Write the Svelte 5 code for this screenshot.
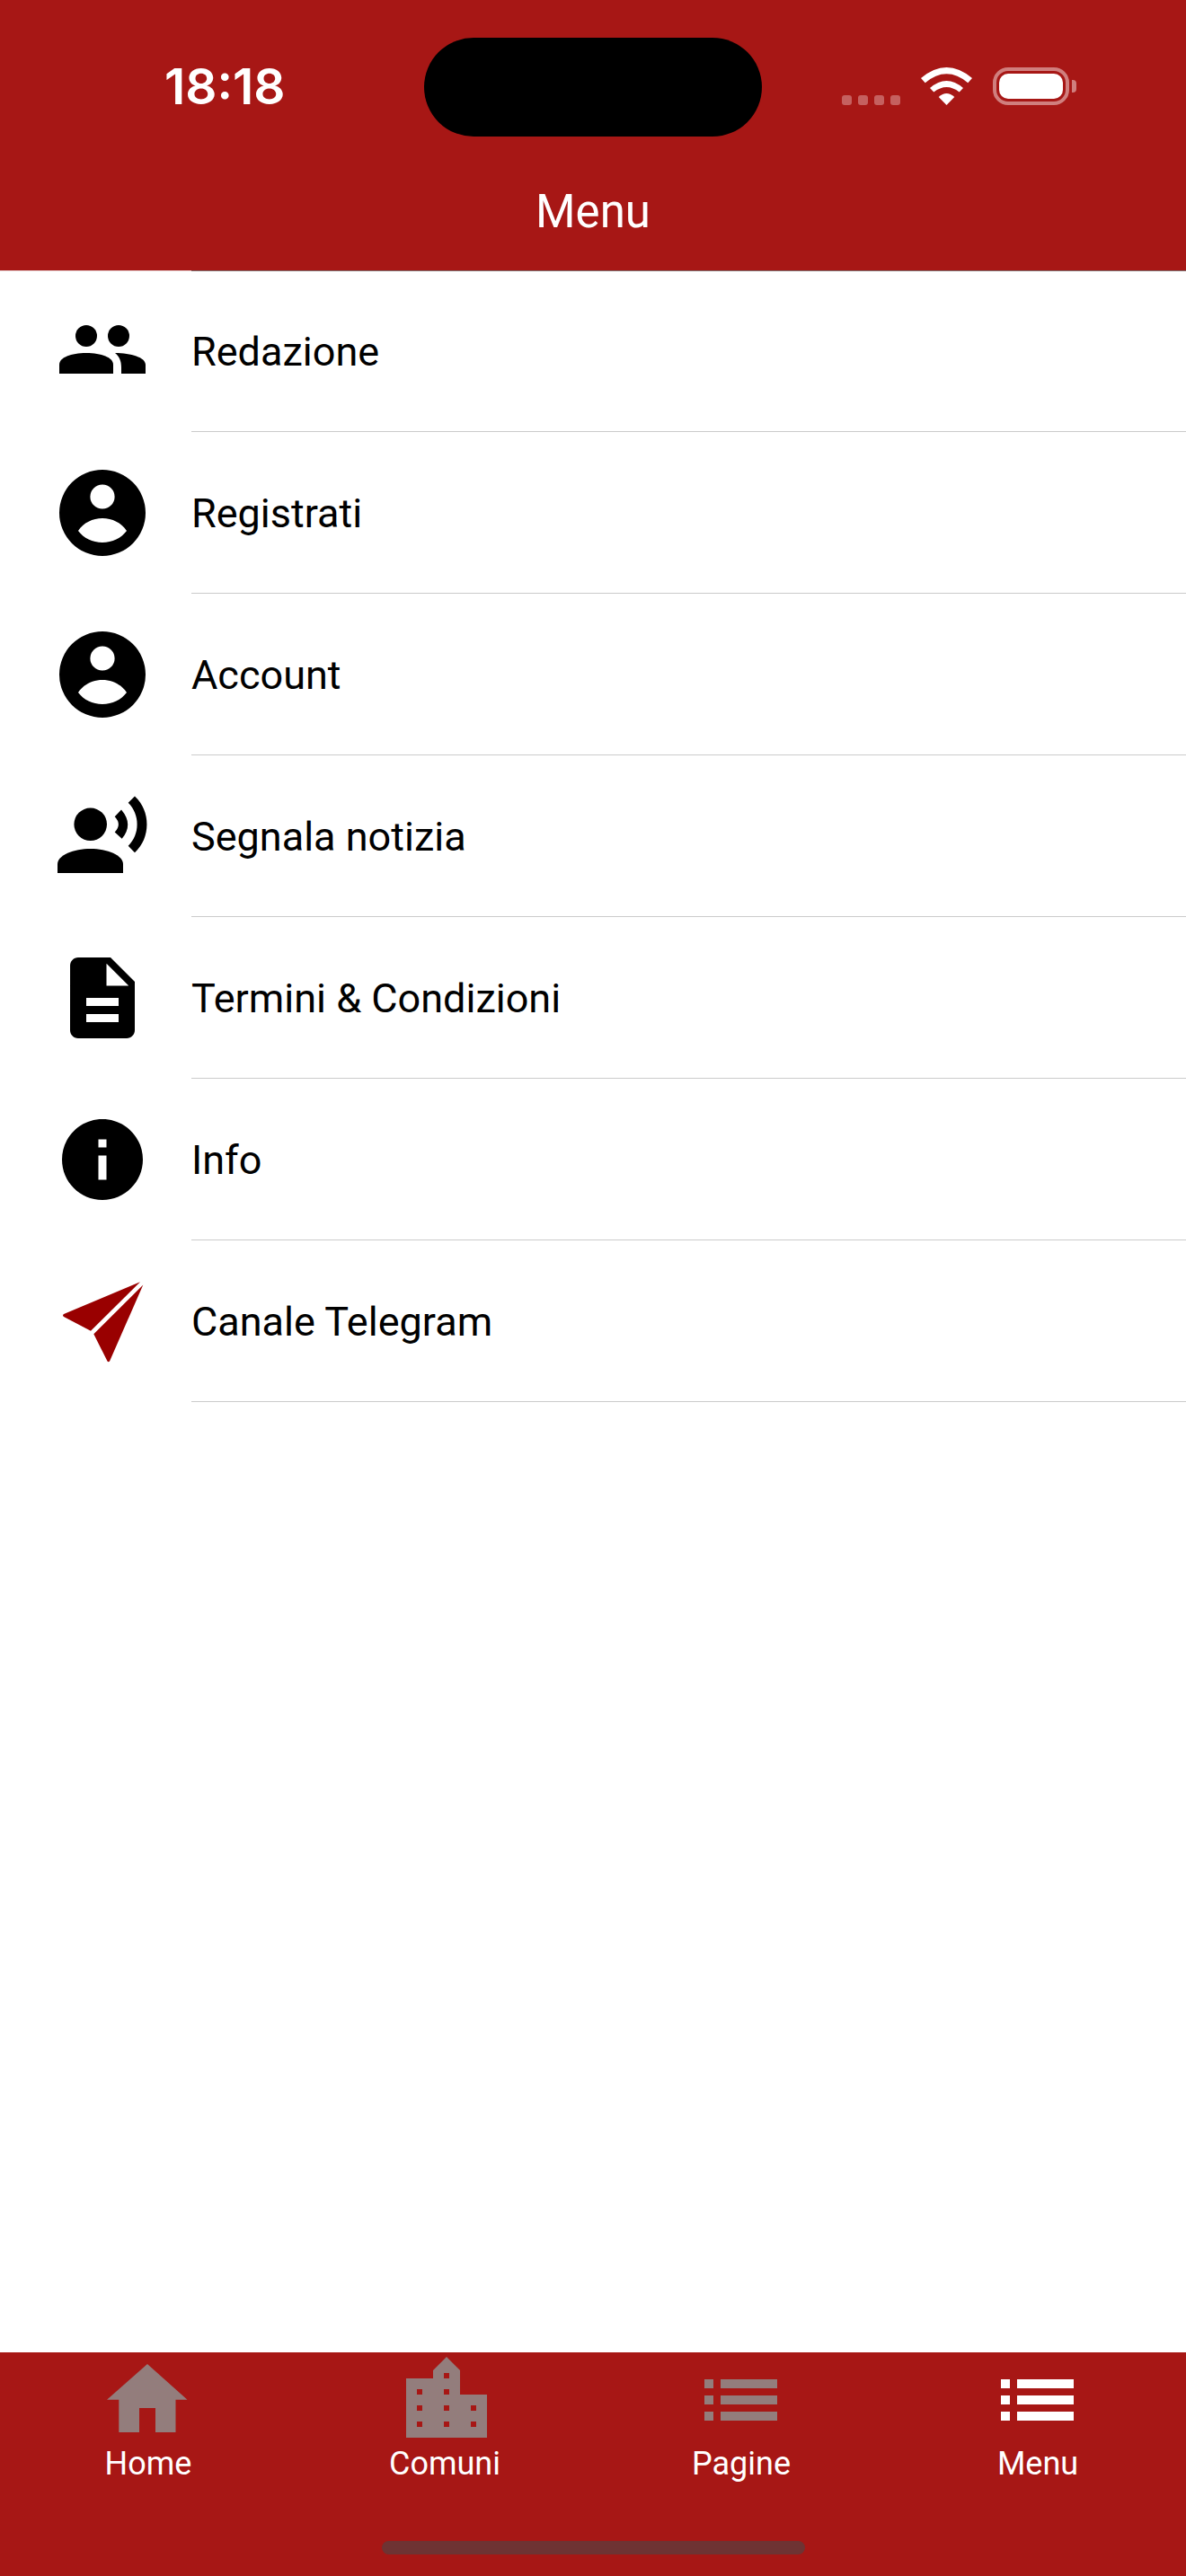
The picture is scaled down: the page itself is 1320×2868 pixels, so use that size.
<script>
  const rows = [
    { label: "Redazione", icon: "people" },
    { label: "Registrati", icon: "account" },
    { label: "Account", icon: "account" },
    { label: "Segnala notizia", icon: "voice" },
    { label: "Termini & Condizioni", icon: "doc" },
    { label: "Info", icon: "info" },
    { label: "Canale Telegram", icon: "plane" }
  ];

  const tabs = [
    { label: "Home", icon: "home" },
    { label: "Comuni", icon: "city" },
    { label: "Pagine", icon: "list" },
    { label: "Menu", icon: "list", active: true }
  ];

  const windows = [
    [57, 21], [27, 39], [57, 39], [27, 57], [57, 57], [87, 57], [27, 75], [57, 75], [87, 75]
  ];
</script>

<div class="screen">
  <header class="header">
    <div class="status">
      <span class="time">18:18</span>
      <div class="island"></div>
      <div class="signal">
        <i></i><i></i><i></i><i></i>
      </div>
      <svg class="wifi" width="57" height="42" viewBox="0 0 57 42">
        <path d="M0 12Q28.5-12 57 12L52.3 17.3Q28.5-2.6 4.7 17.3Z" />
        <path d="M10 23Q28.5 7 47 23L42.7 27.5Q28.5 16.5 14.3 27.5Z" />
        <path d="M19.7 33Q28.5 25 37.3 33L28.5 42Z" />
      </svg>
      <div class="battery"><div class="level"></div></div>
      <div class="nub"></div>
    </div>
    <h1 class="title">Menu</h1>
  </header>
  <div class="hairline"></div>

  <main class="list">
    {#each rows as row}
      <div class="row">
        <div class="row-icon">
          {#if row.icon === "people"}
            <svg width="108" height="108" viewBox="-6 -6 108 108">
              <circle cx="30" cy="31" r="12" />
              <circle cx="66" cy="31" r="12" />
              <path d="M0 73V63C0 55 13 50 30 50S60 55 60 63V73Z" />
              <path d="M62 50C80 50 96 55 96 63V73H69V66C69 59 67 54 62 50Z" />
            </svg>
          {:else if row.icon === "account"}
            <svg width="108" height="108" viewBox="-6 -6 108 108">
              <path
                fill-rule="evenodd"
                d="M48 0A48 48 0 1 1 48 96A48 48 0 1 1 48 0ZM48 16.4A13.6 13.6 0 1 0 48 43.6A13.6 13.6 0 1 0 48 16.4ZM21 68C27 76 37 81 48 81S69 76 75 68C69 59 59 54 48 54S27 59 21 68Z"
              />
            </svg>
          {:else if row.icon === "voice"}
            <svg width="108" height="108" viewBox="-6 -6 108 108">
              <circle cx="34.7" cy="34.8" r="18.3" />
              <path d="M-2 89V79C-2 69 16 62 34.7 62S71 69 71 79V89Z" />
              <path d="M69 18.5Q83 34.8 69.7 50.8L61.7 43.5Q70 34.8 61.7 26.2Z" />
              <path d="M84 3.5C102 20 102 50 84 66.2L76.7 58.8C90 46 90 24 76.7 10.8Z" />
            </svg>
          {:else if row.icon === "doc"}
            <svg width="108" height="108" viewBox="0 0 24 24">
              <path d="M14 2H6c-1.1 0-1.99.9-1.99 2L4 20c0 1.1.89 2 1.99 2H18c1.1 0 2-.9 2-2V8l-6-6zm2 16H8v-2h8v2zm0-4H8v-2h8v2zm-3-5V3.5L18.5 9H13z" />
            </svg>
          {:else if row.icon === "info"}
            <svg width="108" height="108" viewBox="0 0 24 24">
              <path d="M12 2C6.48 2 2 6.48 2 12s4.48 10 10 10 10-4.48 10-10S17.52 2 12 2zm1 15h-2v-6h2v6zm0-8h-2V7h2v2z" />
            </svg>
          {:else}
            <svg width="108" height="108" viewBox="-6 -6 108 108" fill="#990000">
              <path d="M90 4.2L5 40Q3 41.5 5 43L35 58.8Z" />
              <path d="M93.3 7.5L38.3 62.2L53.5 92.5Q54.7 94 56 92.5Z" />
            </svg>
          {/if}
        </div>
        <div class="row-label">{row.label}</div>
      </div>
    {/each}
  </main>

  <footer class="tabbar">
    {#each tabs as tab}
      <div class="tab" class:active={tab.active}>
        {#if tab.icon === "home"}
          <svg class="tab-icon" width="108" height="90" viewBox="1 0 108 90">
            <path d="M54 8L98.5 47.7H85.5V84H63V57H45V84H22.3V47.7H9Z" />
          </svg>
        {:else if tab.icon === "city"}
          <svg class="tab-icon" width="108" height="90" viewBox="1 0 108 90">
            <path d="M57 0L72 15V42H102V90H12V24H42V15Z" />
            {#each windows as w}
              <rect class="window" x={w[0] - 3} y={w[1] - 3} width="6" height="6" />
            {/each}
          </svg>
        {:else}
          <svg class="tab-icon" width="108" height="90" viewBox="0 0 108 90">
            <rect x="13" y="25" width="10" height="10" />
            <rect x="31" y="25" width="63" height="10" />
            <rect x="13" y="43" width="10" height="10" />
            <rect x="31" y="43" width="63" height="10" />
            <rect x="13" y="61" width="10" height="10" />
            <rect x="31" y="61" width="63" height="10" />
          </svg>
        {/if}
        <span class="tab-label">{tab.label}</span>
      </div>
    {/each}
    <div class="home-indicator"></div>
  </footer>
</div>

<style>
  :global(body) {
    margin: 0;
    background: #fff;
  }

  .screen {
    width: 1320px;
    height: 2868px;
    display: flex;
    flex-direction: column;
    font-family: Roboto, "Liberation Sans", sans-serif;
    background: #fff;
    overflow: hidden;
  }

  .header {
    height: 301px;
    box-sizing: border-box;
    background: #a71715;
    color: #fff;
    padding-top: 42px;
  }

  .status {
    height: 110px;
    display: flex;
    align-items: flex-start;
  }

  .time {
    width: 472px;
    box-sizing: border-box;
    padding: 27px 0 0 183px;
    font-family: Inter, sans-serif;
    font-weight: 600;
    font-size: 55px;
    line-height: 54px;
    white-space: nowrap;
  }

  .island {
    width: 376px;
    height: 110px;
    border-radius: 55px;
    background: #000;
  }

  .signal {
    display: flex;
    gap: 7px;
    margin: 64px 0 0 89px;
  }

  .signal i {
    width: 11px;
    height: 11px;
    border-radius: 3px;
    background: #c5605f;
  }

  .wifi {
    margin: 33px 0 0 23px;
    fill: #fff;
  }

  .battery {
    width: 85px;
    height: 42px;
    box-sizing: border-box;
    margin: 33px 0 0 23px;
    padding: 3px;
    border: 4px solid #d07f7e;
    border-radius: 17px;
  }

  .level {
    height: 100%;
    border-radius: 10px;
    background: #fff;
  }

  .nub {
    width: 5px;
    height: 14px;
    margin: 47px 0 0 3px;
    border-radius: 0 4px 4px 0;
    background: #d07f7e;
  }

  .title {
    margin: 54px 0 0;
    font-size: 51px;
    font-weight: 400;
    line-height: 60px;
    text-align: center;
  }

  .hairline {
    height: 1px;
    margin-bottom: -1px;
    position: relative;
    background: linear-gradient(to right, #e4d0cf 213px, #7d7171 213px);
  }

  .list {
    flex: 1;
  }

  .row {
    height: 180px;
    box-sizing: border-box;
    padding-bottom: 1px;
    display: flex;
    align-items: center;
    position: relative;
  }

  .row::after {
    content: "";
    position: absolute;
    left: 213px;
    right: 0;
    bottom: 0;
    height: 1px;
    background: #cbcbcb;
  }

  .row-icon {
    width: 153px;
    padding-left: 60px;
    height: 108px;
  }

  .row-label {
    margin-top: 2px;
    font-size: 45px;
    color: #000;
  }

  .tabbar {
    height: 249px;
    display: grid;
    grid-template-columns: repeat(4, 330px);
    background: #a71715;
    position: relative;
    padding-top: 5px;
    box-sizing: border-box;
  }

  .tab {
    display: flex;
    flex-direction: column;
    align-items: center;
    color: #fff;
  }

  .tab-icon {
    fill: #937d7c;
  }

  .tab.active .tab-icon {
    fill: #fff;
  }

  .tab-icon .window {
    fill: #a71715;
  }

  .tab-label {
    margin-top: 8px;
    font-size: 36px;
    line-height: 42px;
  }

  .home-indicator {
    position: absolute;
    left: 425px;
    bottom: 24px;
    width: 471px;
    height: 15px;
    border-radius: 8px;
    background: #6e3333;
  }
</style>
